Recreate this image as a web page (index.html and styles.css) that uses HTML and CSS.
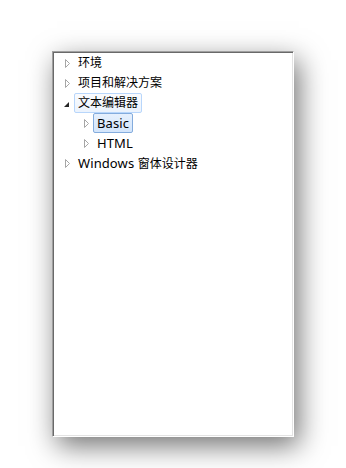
FILE: index.html
```html
<!DOCTYPE html>
<html>
<head>
<meta charset="utf-8">
<link rel="stylesheet" href="styles.css">
</head>
<body>
<div class="tree">
  <div class="row">
    <span class="exp"><svg width="6" height="9" viewBox="0 0 6 9"><polygon points="0.5,0.5 0.5,8.5 4.5,4.5" fill="#fff" stroke="#a6a6a6"/></svg></span>
    <span class="label">环境</span>
  </div>
  <div class="row">
    <span class="exp"><svg width="6" height="9" viewBox="0 0 6 9"><polygon points="0.5,0.5 0.5,8.5 4.5,4.5" fill="#fff" stroke="#a6a6a6"/></svg></span>
    <span class="label">项目和解决方案</span>
  </div>
  <div class="row">
    <span class="exp open"><svg width="6" height="6" viewBox="0 0 6 6"><polygon points="5,0 5,5 0,5" fill="#262626"/></svg></span>
    <span class="label hot">文本编辑器</span>
  </div>
  <div class="row child">
    <span class="exp"><svg width="6" height="9" viewBox="0 0 6 9"><polygon points="0.5,0.5 0.5,8.5 4.5,4.5" fill="#fff" stroke="#a6a6a6"/></svg></span>
    <span class="label sel"><span class="lat">Basic</span></span>
  </div>
  <div class="row child">
    <span class="exp"><svg width="6" height="9" viewBox="0 0 6 9"><polygon points="0.5,0.5 0.5,8.5 4.5,4.5" fill="#fff" stroke="#a6a6a6"/></svg></span>
    <span class="label"><span class="lat">HTML</span></span>
  </div>
  <div class="row">
    <span class="exp"><svg width="6" height="9" viewBox="0 0 6 9"><polygon points="0.5,0.5 0.5,8.5 4.5,4.5" fill="#fff" stroke="#a6a6a6"/></svg></span>
    <span class="label"><span class="lat">Windows </span>窗体设计器</span>
  </div>
</div>
</body>
</html>
```
FILE: styles.css
```css
html, body {
  margin: 0;
  padding: 0;
  background: #fff;
}
body {
  width: 346px;
  height: 468px;
  overflow: hidden;
  font-family: "Noto Sans", "Noto Sans CJK SC", sans-serif;
  font-size: 12px;
  color: #000;
}
.tree {
  box-sizing: border-box;
  margin: 51px 0 0 52px;
  width: 242px;
  height: 386px;
  background: #fff;
  border: 1px solid;
  border-color: #a0a0a0 #ffffff #ffffff #a0a0a0;
  box-shadow: inset 1px 1px 0 #696969, inset -1px -1px 0 #e3e3e3, 5px 9px 26px rgba(0, 0, 0, 0.55);
  padding-top: 1px;
}
.row {
  display: flex;
  align-items: center;
  height: 20px;
  padding-left: 11px;
}
.row.child {
  padding-left: 30px;
}
.exp {
  width: 10px;
  display: flex;
  align-items: center;
  padding-left: 1px;
  box-sizing: border-box;
}
.exp svg {
  display: block;
}
.exp.open {
  padding-left: 0;
  padding-top: 3px;
}
.label {
  box-sizing: border-box;
  height: 20px;
  line-height: 18px;
  padding: 0 3px;
  border: 1px solid transparent;
  border-radius: 2px;
  white-space: nowrap;
}
.lat {
  font-size: 13px;
  letter-spacing: 0.1px;
}
.label.hot {
  border-color: #b8d6fb;
  background: linear-gradient(#fafbfd, #ebf3fd);
}
.label.sel {
  border-color: #84acdd;
  background: linear-gradient(#e6f0fd, #d3e5fb);
}
```
